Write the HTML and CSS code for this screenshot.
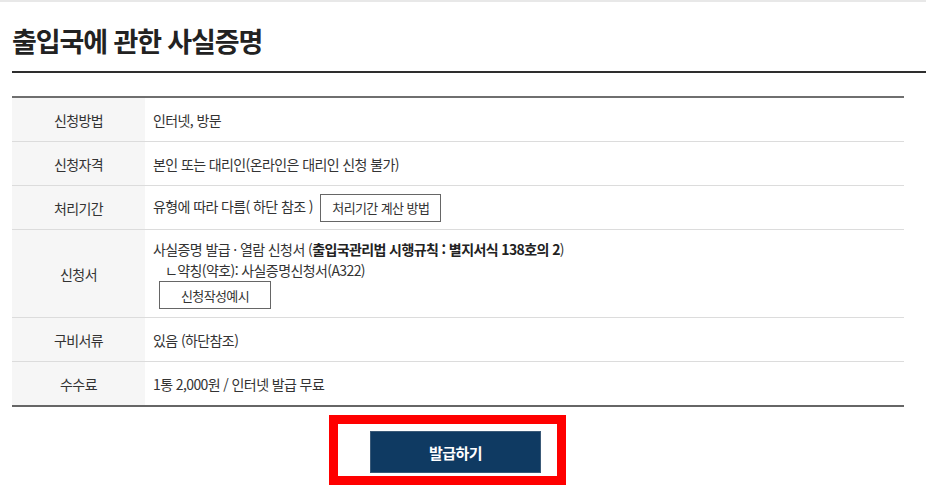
FILE: index.html
```html
<!DOCTYPE html>
<html lang="ko">
<head>
<meta charset="utf-8">
<link rel="stylesheet" href="styles.css">
</head>
<body>
<div class="topline"></div>
<div class="head">
  <h1 class="title">출입국에 관한 사실증명</h1>
</div>
<table class="info">
  <tr>
    <th>신청방법</th>
    <td>인터넷, 방문</td>
  </tr>
  <tr>
    <th>신청자격</th>
    <td>본인 또는 대리인(온라인은 대리인 신청 불가)</td>
  </tr>
  <tr class="row-btn">
    <th>처리기간</th>
    <td>유형에 따라 다름( 하단 참조 ) <button class="sub-btn calc">처리기간 계산 방법</button></td>
  </tr>
  <tr class="row-form">
    <th>신청서</th>
    <td>
      <div class="line">사실증명 발급 · 열람 신청서 (<b>출입국관리법 시행규칙 : 별지서식 138호의 2</b>)</div>
      <div class="line sub">ㄴ약칭(약호): 사실증명신청서(A322)</div>
      <button class="sub-btn example">신청작성예시</button>
    </td>
  </tr>
  <tr>
    <th>구비서류</th>
    <td>있음 (하단참조)</td>
  </tr>
  <tr>
    <th>수수료</th>
    <td>1통 2,000원 / 인터넷 발급 무료</td>
  </tr>
</table>
<div class="actions">
  <div class="highlight">
    <button class="issue">발급하기</button>
  </div>
</div>
</body>
</html>
```
FILE: styles.css
```css
html, body {
  margin: 0;
  padding: 0;
  background: #fff;
}
body {
  font-family: "Noto Sans CJK KR", "Noto Sans", sans-serif;
  color: #333;
  width: 926px;
  height: 499px;
  overflow: hidden;
}
.topline {
  height: 2px;
  background: #e8e8e8;
}
.head {
  margin-left: 12px;
  padding-top: 25px;
  padding-bottom: 17px;
  border-bottom: 2px solid #2e2e2e;
}
.title {
  margin: 0;
  font-size: 27px;
  line-height: 27px;
  font-weight: 700;
  letter-spacing: -1.1px;
  color: #222;
}
.info {
  margin: 23px 0 0 12px;
  width: 892px;
  border-collapse: collapse;
  border-top: 2px solid #6f6f6f;
  border-bottom: 2px solid #666;
  font-size: 14px;
  letter-spacing: -0.6px;
}
.info tr {
  border-bottom: 1px solid #dcdcdc;
}
.info tr:last-child {
  border-bottom: none;
}
.info th {
  width: 133px;
  height: 43px;
  padding: 0;
  background: #f6f6f6;
  font-weight: 400;
  text-align: center;
  color: #333;
}
.info td {
  padding: 0 8px;
  height: 43px;
  color: #333;
}
.info td b {
  font-weight: 700;
  color: #222;
}
.row-form td {
  padding-top: 9px;
  padding-bottom: 8px;
}
.line {
  line-height: 21px;
}
.line.sub {
  padding-left: 12px;
}
.sub-btn {
  font-family: inherit;
  font-size: 13px;
  letter-spacing: -0.6px;
  color: #333;
  background: #fff;
  border: 1px solid #666;
  height: 28px;
  padding: 0;
  vertical-align: middle;
}
.calc {
  width: 121px;
  margin-left: 4px;
}
.example {
  width: 112px;
  margin-left: 6px;
  display: block;
}
.actions {
  padding: 8px 0 0 329px;
  display: flex;
}
.highlight {
  border: 9px solid #ff0000;
  padding: 7px 16px 3px 32px;
}
.issue {
  display: block;
  width: 171px;
  height: 42px;
  background: #0f3a62;
  border: 1px solid #3b5a78;
  color: #fff;
  font-family: inherit;
  font-size: 15px;
  font-weight: 700;
  letter-spacing: -0.5px;
  padding: 0;
}
```
